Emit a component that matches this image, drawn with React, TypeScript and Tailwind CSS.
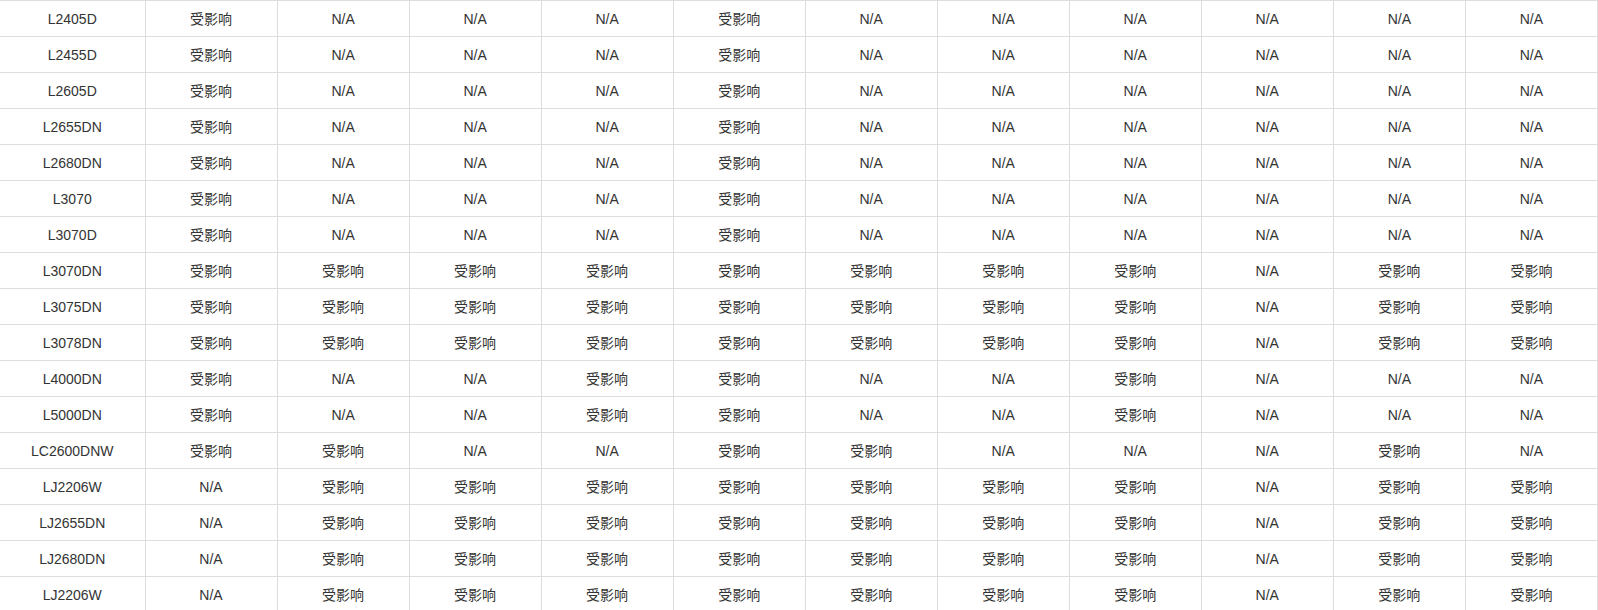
const Y = "受影响";
const N = "N/A";

const rows: [string, string][] = [
  ["L2405D", "YNNNYNNNNNN"],
  ["L2455D", "YNNNYNNNNNN"],
  ["L2605D", "YNNNYNNNNNN"],
  ["L2655DN", "YNNNYNNNNNN"],
  ["L2680DN", "YNNNYNNNNNN"],
  ["L3070", "YNNNYNNNNNN"],
  ["L3070D", "YNNNYNNNNNN"],
  ["L3070DN", "YYYYYYYYNYY"],
  ["L3075DN", "YYYYYYYYNYY"],
  ["L3078DN", "YYYYYYYYNYY"],
  ["L4000DN", "YNNYYNNYNNN"],
  ["L5000DN", "YNNYYNNYNNN"],
  ["LC2600DNW", "YYNNYYNNNYN"],
  ["LJ2206W", "NYYYYYYYNYY"],
  ["LJ2655DN", "NYYYYYYYNYY"],
  ["LJ2680DN", "NYYYYYYYNYY"],
  ["LJ2206W", "NYYYYYYYNYY"],
];

export default function App() {
  return (
    <div className="bg-white" style={{ fontFamily: '"Liberation Sans", "Noto Sans CJK SC", sans-serif' }}>
      <table className="w-full table-fixed border-collapse text-[14px] text-[#333]">
        <colgroup>
          <col className="w-[145px]" />
          {Array.from({ length: 11 }).map((_, i) => (
            <col key={i} />
          ))}
        </colgroup>
        <tbody>
          {rows.map(([model, flags], r) => (
            <tr key={r}>
              <td className="h-[36px] border border-l-0 border-[#dedede] p-0 pt-[2px] text-center">{model}</td>
              {flags.split("").map((f, c) => (
                <td key={c} className="h-[36px] border border-[#dedede] p-0 pt-[2px] text-center">
                  {f === "Y" ? Y : N}
                </td>
              ))}
            </tr>
          ))}
        </tbody>
      </table>
    </div>
  );
}
